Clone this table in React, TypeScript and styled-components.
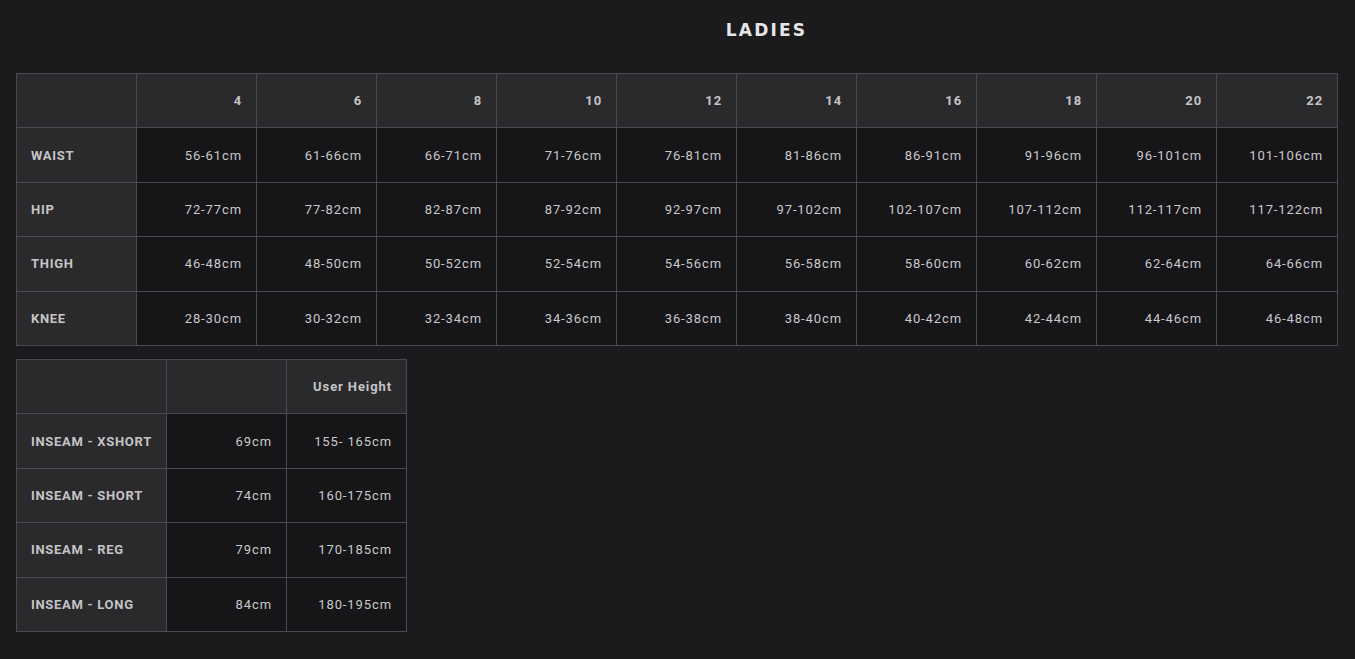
import React from "react";
import styled, { createGlobalStyle } from "styled-components";

const Global = createGlobalStyle`
  html, body { margin: 0; padding: 0; background: #1b1a1d; }
  body { font-family: Roboto, "Liberation Sans", sans-serif; }
`;

const Page = styled.div`
  padding: 0 16px 28px 16px;
  display: flex;
  flex-direction: column;
  align-items: flex-start;
`;

const Title = styled.h1`
  align-self: stretch;
  margin: 0;
  height: 73px;
  display: flex;
  align-items: center;
  justify-content: center;
  padding-left: 178px;
  padding-bottom: 14px;
  box-sizing: border-box;
  font-family: "DejaVu Sans", sans-serif;
  font-weight: 700;
  font-size: 17px;
  letter-spacing: 2.2px;
  color: #e6e6e8;
`;

const Table = styled.table`
  border-collapse: collapse;
  table-layout: fixed;
  margin-bottom: 13px;
`;

const Cell = styled.td<{ $w: number; $head?: boolean; $label?: boolean }>`
  width: ${(p) => p.$w}px;
  height: 54.4px;
  box-sizing: border-box;
  border: 1px solid #4a494d;
  background: ${(p) => (p.$head || p.$label ? "#2a292c" : "#161518")};
  color: ${(p) => (p.$head || p.$label ? "#c4c4c6" : "#c9c9cb")};
  font-weight: ${(p) => (p.$head || p.$label ? 700 : 400)};
  font-size: 13px;
  letter-spacing: ${(p) => (p.$label ? "0.7px" : "0.9px")};
  text-align: ${(p) => (p.$label ? "left" : "right")};
  padding: ${(p) => (p.$label ? "0 0 0 14px" : "0 14px 0 0")};
  white-space: nowrap;
  vertical-align: middle;
`;

const sizes = ["4", "6", "8", "10", "12", "14", "16", "18", "20", "22"];
const ladies: [string, string[]][] = [
  ["WAIST", ["56-61cm", "61-66cm", "66-71cm", "71-76cm", "76-81cm", "81-86cm", "86-91cm", "91-96cm", "96-101cm", "101-106cm"]],
  ["HIP", ["72-77cm", "77-82cm", "82-87cm", "87-92cm", "92-97cm", "97-102cm", "102-107cm", "107-112cm", "112-117cm", "117-122cm"]],
  ["THIGH", ["46-48cm", "48-50cm", "50-52cm", "52-54cm", "54-56cm", "56-58cm", "58-60cm", "60-62cm", "62-64cm", "64-66cm"]],
  ["KNEE", ["28-30cm", "30-32cm", "32-34cm", "34-36cm", "36-38cm", "38-40cm", "40-42cm", "42-44cm", "44-46cm", "46-48cm"]],
];

const inseam: [string, string, string][] = [
  ["INSEAM - XSHORT", "69cm", "155- 165cm"],
  ["INSEAM - SHORT", "74cm", "160-175cm"],
  ["INSEAM - REG", "79cm", "170-185cm"],
  ["INSEAM - LONG", "84cm", "180-195cm"],
];

export default function App() {
  return (
    <>
      <Global />
      <Page>
        <Title>LADIES</Title>
        <Table>
          <tbody>
            <tr>
              <Cell $w={120} $head />
              {sizes.map((s, i) => (
                <Cell key={s} $w={i === sizes.length - 1 ? 121 : 120} $head>
                  {s}
                </Cell>
              ))}
            </tr>
            {ladies.map(([label, vals]) => (
              <tr key={label}>
                <Cell $w={120} $label>
                  {label}
                </Cell>
                {vals.map((v, i) => (
                  <Cell key={i} $w={i === vals.length - 1 ? 121 : 120}>
                    {v}
                  </Cell>
                ))}
              </tr>
            ))}
          </tbody>
        </Table>
        <Table>
          <tbody>
            <tr>
              <Cell $w={150} $head />
              <Cell $w={120} $head />
              <Cell $w={120} $head>
                User Height
              </Cell>
            </tr>
            {inseam.map(([label, a, b]) => (
              <tr key={label}>
                <Cell $w={150} $label>
                  {label}
                </Cell>
                <Cell $w={120}>{a}</Cell>
                <Cell $w={120}>{b}</Cell>
              </tr>
            ))}
          </tbody>
        </Table>
      </Page>
    </>
  );
}
